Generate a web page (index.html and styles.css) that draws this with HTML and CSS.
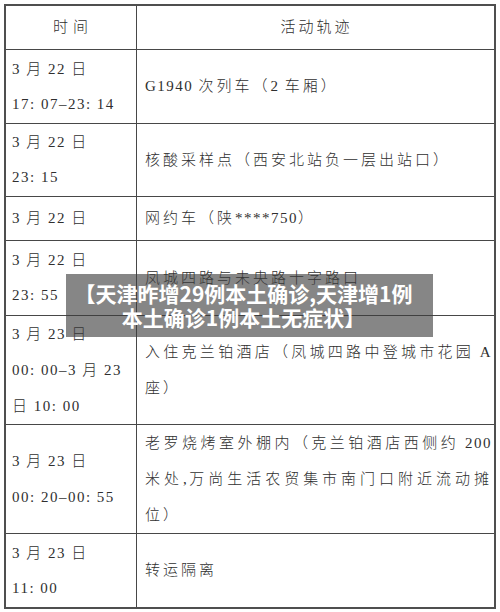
FILE: index.html
```html
<!DOCTYPE html>
<html lang="zh-CN">
<head>
<meta charset="utf-8">
<title>活动轨迹</title>
<link rel="stylesheet" href="styles.css">
</head>
<body>
<div class="page">
  <div class="tbl">
    <div class="c l h1"><span class="hd">时间</span></div>
    <div class="c r h1 ctr"><span class="hd2">活动轨迹</span></div>

    <div class="c l"><div>3 月 22 日</div><div>17: 07–23: 14</div></div>
    <div class="c r"><div><span class="lat">G1940 </span>次列车（<span class="lat">2 </span>车厢）</div></div>

    <div class="c l"><div>3 月 22 日</div><div>23: 15</div></div>
    <div class="c r"><div>核酸采样点（西安北站负一层出站口）</div></div>

    <div class="c l"><div>3 月 22 日</div></div>
    <div class="c r"><div>网约车（陕<span class="lat">****750</span>）</div></div>

    <div class="c l"><div>3 月 22 日</div><div>23: 55</div></div>
    <div class="c r"><div>凤城四路与未央路十字路口</div></div>

    <div class="c l tall"><div>3 月 23 日</div><div>00: 00–3 月 23</div><div>日 10: 00</div></div>
    <div class="c r tall"><div class="full">入住克兰铂酒店（凤城四路中登城市花园<span class="lat"> A</span></div><div>座）</div></div>

    <div class="c l tall"><div>3 月 23 日</div><div>00: 20–00: 55</div></div>
    <div class="c r tall"><div class="full">老罗烧烤室外棚内（克兰铂酒店西侧约<span class="lat"> 200</span></div><div class="full">米处<span class="lat">,</span>万尚生活农贸集市南门口附近流动摊</div><div>位）</div></div>

    <div class="c l last"><div>3 月 23 日</div><div>11: 00</div></div>
    <div class="c r last"><div>转运隔离</div></div>
  </div>

  <div class="caption">【天津昨增29例本土确诊,天津增1例<br>本土确诊1例本土无症状】</div>
</div>
</body>
</html>
```

FILE: styles.css
```css
html, body {
  margin: 0;
  padding: 0;
  background: #ffffff;
}

.page {
  position: relative;
  width: 500px;
  height: 612px;
  overflow: hidden;
  padding-top: 4px;
  box-sizing: border-box;
}

.tbl {
  margin-left: 4px;
  width: 492px;
  box-sizing: border-box;
  border: 2px solid #4f4f4f;
  display: grid;
  grid-template-columns: 131px 1fr;
  grid-template-rows: 44px 74px 73px 44px 75px 109px 109px 73px;
  font-family: "Liberation Serif", "Noto Sans CJK SC", serif;
  font-size: 15px;
  font-weight: 300;
  color: #2f2f2f;
}

.c {
  box-sizing: border-box;
  border-bottom: 1px solid #474747;
  display: flex;
  flex-direction: column;
  justify-content: center;
  line-height: 35px;
  white-space: nowrap;
}

.c.last {
  border-bottom: none;
}

.c.tall {
  line-height: 36px;
}

.l {
  border-right: 1px solid #474747;
  padding-left: 6px;
  letter-spacing: 1.5px;
}

.r {
  padding-left: 8px;
  padding-right: 2px;
  letter-spacing: 3px;
}

.h1 {
  align-items: center;
  padding-left: 0;
  padding-right: 0;
}

.hd {
  letter-spacing: 5px;
  margin-left: 4px;
}

.hd2 {
  letter-spacing: 3px;
  margin-left: 2px;
}

.lat {
  letter-spacing: 1.5px;
}

.full {
  text-align: justify;
  text-align-last: justify;
}

.caption {
  position: absolute;
  left: 66px;
  top: 274px;
  width: 367px;
  height: 63px;
  box-sizing: border-box;
  padding: 7px 12px 0 0;
  background: rgba(60, 60, 60, 0.62);
  color: #ffffff;
  font-family: "Noto Sans CJK SC", "Noto Sans", sans-serif;
  font-weight: 700;
  font-size: 21px;
  line-height: 24px;
  text-align: center;
  white-space: nowrap;
}
```
